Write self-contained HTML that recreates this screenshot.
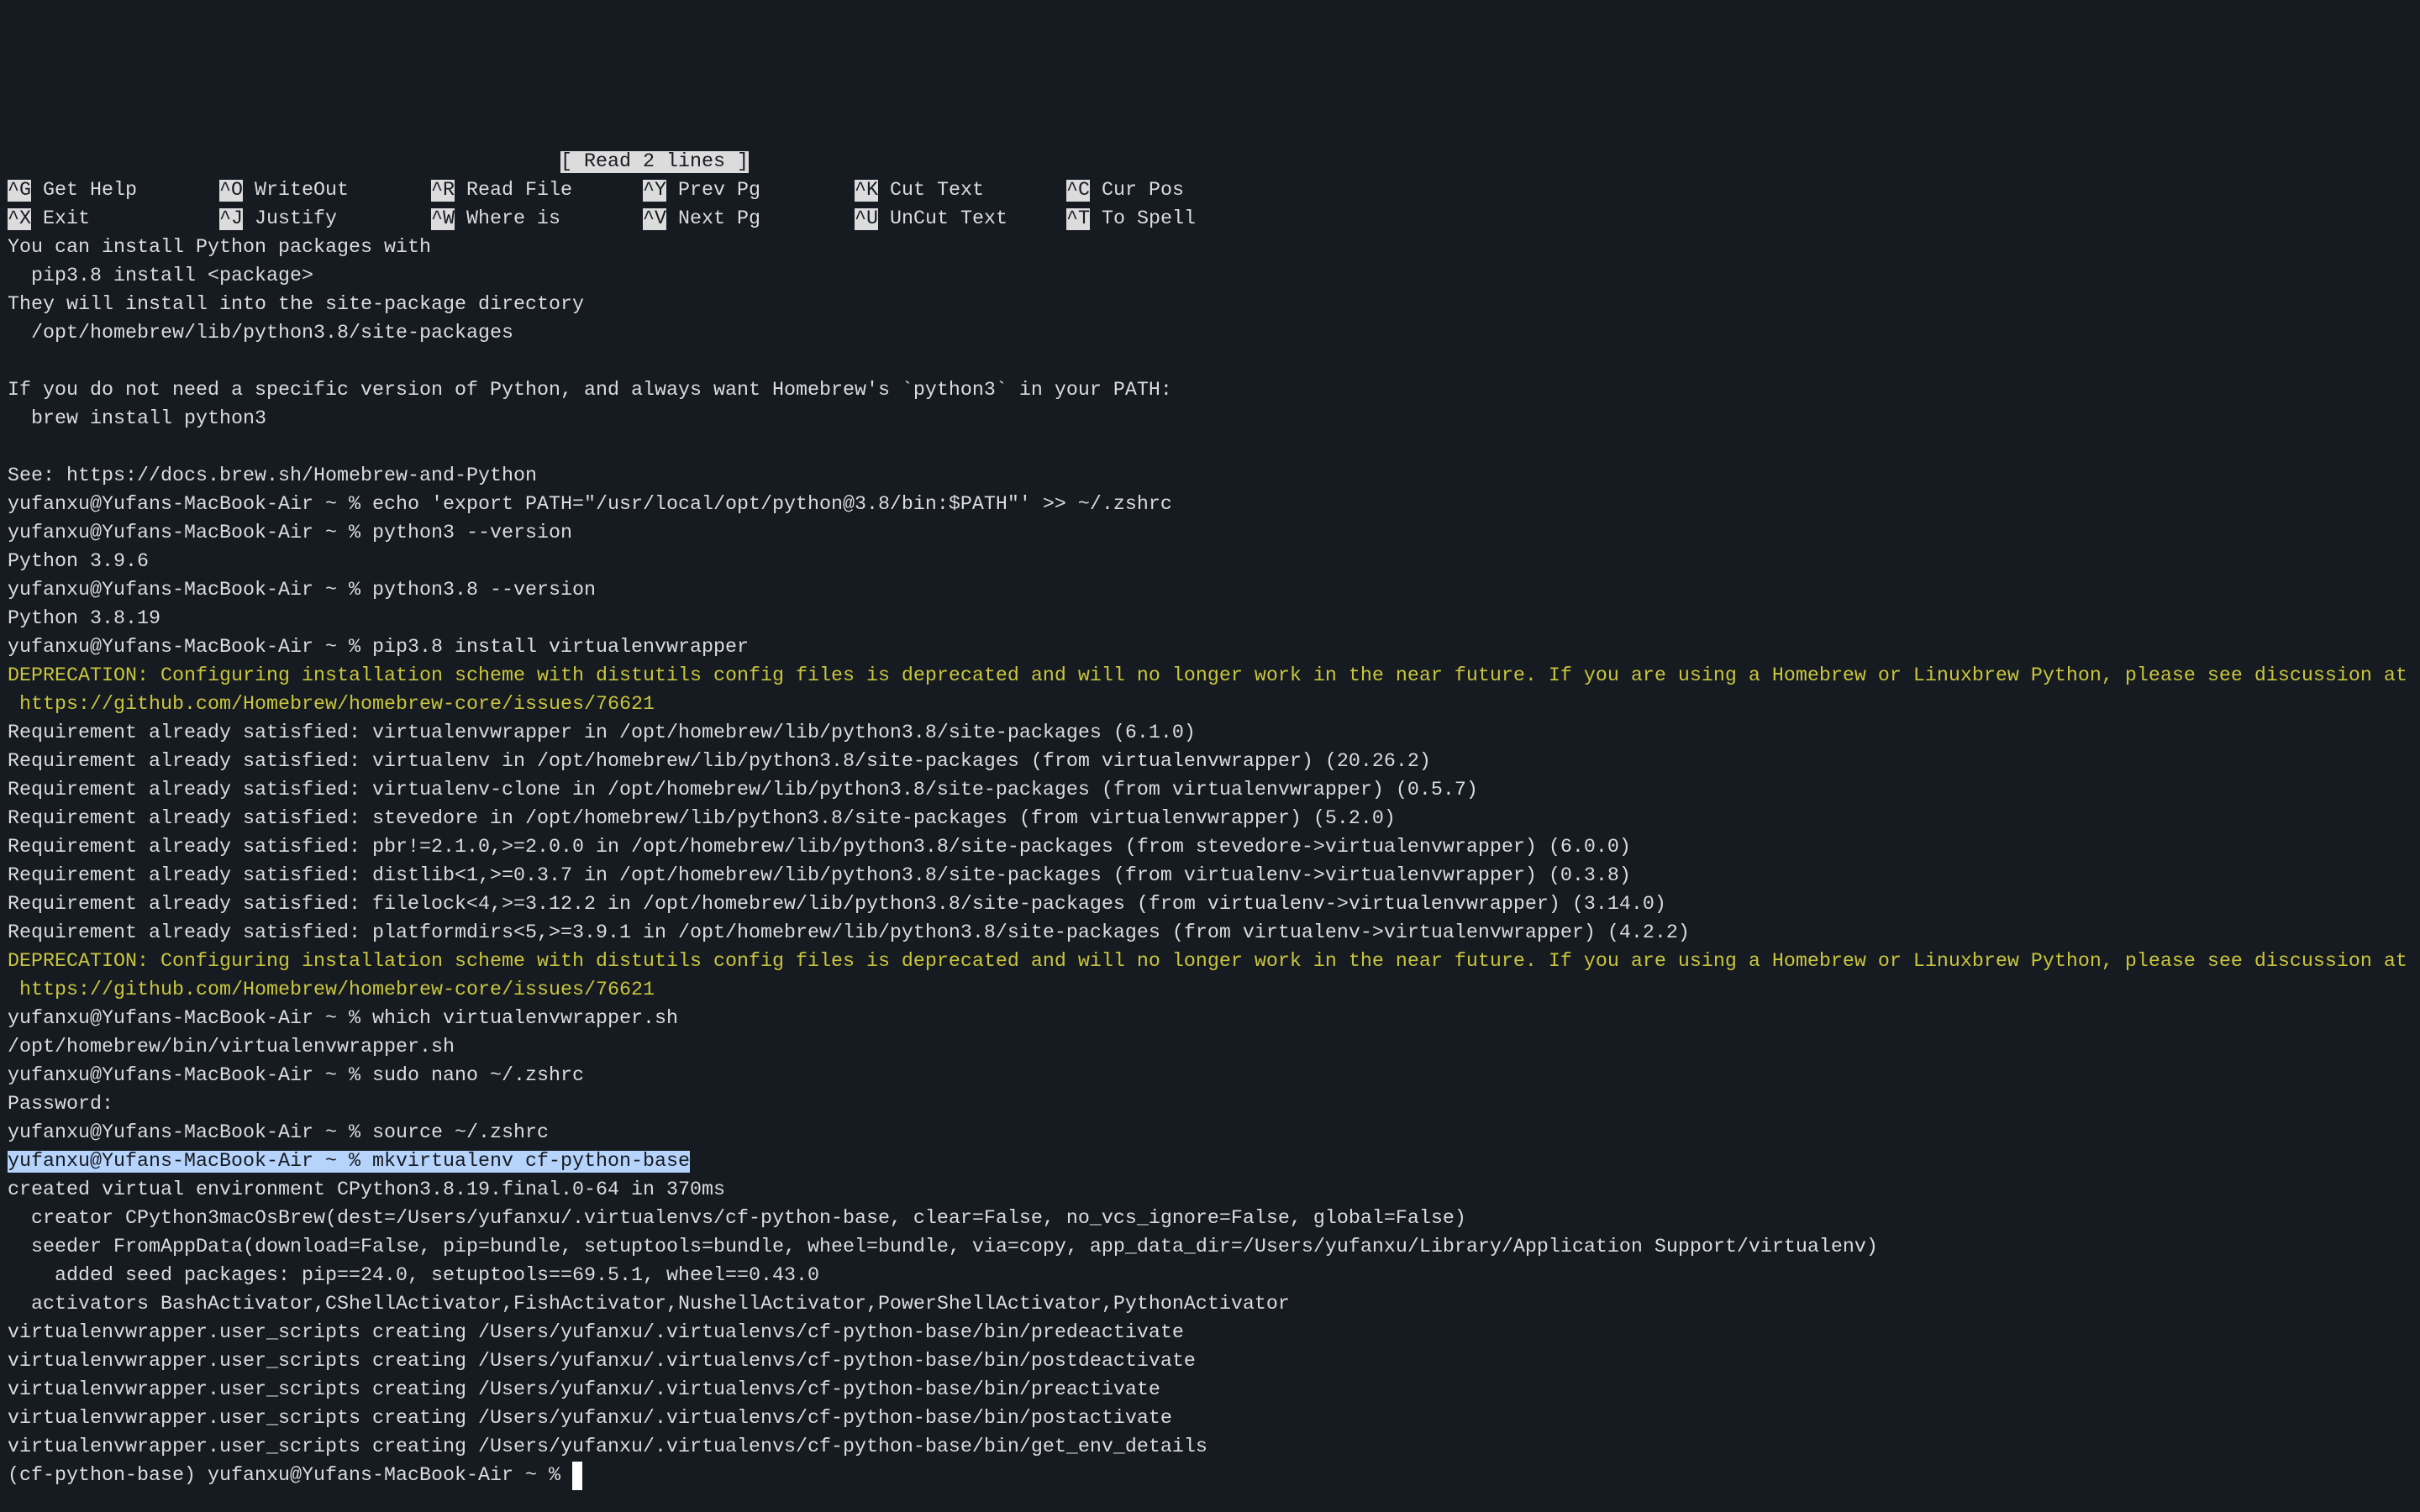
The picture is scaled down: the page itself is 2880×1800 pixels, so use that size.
<!DOCTYPE html>
<html><head><meta charset="utf-8"><style>
html,body{margin:0;padding:0;background:#161a21;width:2880px;height:1800px;overflow:hidden}
pre{position:absolute;left:9px;top:176px;margin:0;font-family:"Liberation Mono",monospace;font-size:23.33px;line-height:34px;color:#dcdcdc;white-space:pre}
.i{background:#dcdcdc;color:#161a21}
.y{color:#c9c63c}
.s{background:#b6d3fb;color:#161a21}
.c{display:inline-block;width:12px;height:34px;background:#fff;vertical-align:top}
</style></head><body><pre>                                               <span class="i">[ Read 2 lines ]</span>
<span class="i">^G</span> Get Help       <span class="i">^O</span> WriteOut       <span class="i">^R</span> Read File      <span class="i">^Y</span> Prev Pg        <span class="i">^K</span> Cut Text       <span class="i">^C</span> Cur Pos
<span class="i">^X</span> Exit           <span class="i">^J</span> Justify        <span class="i">^W</span> Where is       <span class="i">^V</span> Next Pg        <span class="i">^U</span> UnCut Text     <span class="i">^T</span> To Spell
You can install Python packages with
  pip3.8 install &lt;package&gt;
They will install into the site-package directory
  /opt/homebrew/lib/python3.8/site-packages

If you do not need a specific version of Python, and always want Homebrew's `python3` in your PATH:
  brew install python3

See: https://docs.brew.sh/Homebrew-and-Python
yufanxu@Yufans-MacBook-Air ~ % echo 'export PATH="/usr/local/opt/python@3.8/bin:$PATH"' &gt;&gt; ~/.zshrc
yufanxu@Yufans-MacBook-Air ~ % python3 --version
Python 3.9.6
yufanxu@Yufans-MacBook-Air ~ % python3.8 --version
Python 3.8.19
yufanxu@Yufans-MacBook-Air ~ % pip3.8 install virtualenvwrapper
<span class="y">DEPRECATION: Configuring installation scheme with distutils config files is deprecated and will no longer work in the near future. If you are using a Homebrew or Linuxbrew Python, please see discussion at
 https://github.com/Homebrew/homebrew-core/issues/76621</span>
Requirement already satisfied: virtualenvwrapper in /opt/homebrew/lib/python3.8/site-packages (6.1.0)
Requirement already satisfied: virtualenv in /opt/homebrew/lib/python3.8/site-packages (from virtualenvwrapper) (20.26.2)
Requirement already satisfied: virtualenv-clone in /opt/homebrew/lib/python3.8/site-packages (from virtualenvwrapper) (0.5.7)
Requirement already satisfied: stevedore in /opt/homebrew/lib/python3.8/site-packages (from virtualenvwrapper) (5.2.0)
Requirement already satisfied: pbr!=2.1.0,&gt;=2.0.0 in /opt/homebrew/lib/python3.8/site-packages (from stevedore-&gt;virtualenvwrapper) (6.0.0)
Requirement already satisfied: distlib&lt;1,&gt;=0.3.7 in /opt/homebrew/lib/python3.8/site-packages (from virtualenv-&gt;virtualenvwrapper) (0.3.8)
Requirement already satisfied: filelock&lt;4,&gt;=3.12.2 in /opt/homebrew/lib/python3.8/site-packages (from virtualenv-&gt;virtualenvwrapper) (3.14.0)
Requirement already satisfied: platformdirs&lt;5,&gt;=3.9.1 in /opt/homebrew/lib/python3.8/site-packages (from virtualenv-&gt;virtualenvwrapper) (4.2.2)
<span class="y">DEPRECATION: Configuring installation scheme with distutils config files is deprecated and will no longer work in the near future. If you are using a Homebrew or Linuxbrew Python, please see discussion at
 https://github.com/Homebrew/homebrew-core/issues/76621</span>
yufanxu@Yufans-MacBook-Air ~ % which virtualenvwrapper.sh
/opt/homebrew/bin/virtualenvwrapper.sh
yufanxu@Yufans-MacBook-Air ~ % sudo nano ~/.zshrc
Password:
yufanxu@Yufans-MacBook-Air ~ % source ~/.zshrc
<span class="s">yufanxu@Yufans-MacBook-Air ~ % mkvirtualenv cf-python-base</span>
created virtual environment CPython3.8.19.final.0-64 in 370ms
  creator CPython3macOsBrew(dest=/Users/yufanxu/.virtualenvs/cf-python-base, clear=False, no_vcs_ignore=False, global=False)
  seeder FromAppData(download=False, pip=bundle, setuptools=bundle, wheel=bundle, via=copy, app_data_dir=/Users/yufanxu/Library/Application Support/virtualenv)
    added seed packages: pip==24.0, setuptools==69.5.1, wheel==0.43.0
  activators BashActivator,CShellActivator,FishActivator,NushellActivator,PowerShellActivator,PythonActivator
virtualenvwrapper.user_scripts creating /Users/yufanxu/.virtualenvs/cf-python-base/bin/predeactivate
virtualenvwrapper.user_scripts creating /Users/yufanxu/.virtualenvs/cf-python-base/bin/postdeactivate
virtualenvwrapper.user_scripts creating /Users/yufanxu/.virtualenvs/cf-python-base/bin/preactivate
virtualenvwrapper.user_scripts creating /Users/yufanxu/.virtualenvs/cf-python-base/bin/postactivate
virtualenvwrapper.user_scripts creating /Users/yufanxu/.virtualenvs/cf-python-base/bin/get_env_details
(cf-python-base) yufanxu@Yufans-MacBook-Air ~ % <span class="c"></span></pre></body></html>
